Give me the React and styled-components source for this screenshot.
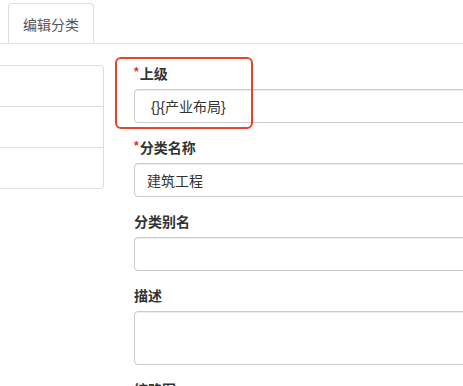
import React from 'react';
import styled, { createGlobalStyle } from 'styled-components';

const GlobalStyle = createGlobalStyle`
  html, body {
    margin: 0;
    padding: 0;
    background: #fff;
    overflow: hidden;
  }
  body {
    font-family: "Helvetica Neue", "Liberation Sans", "Noto Sans CJK SC", sans-serif;
    font-size: 14px;
    color: #333;
  }
`;

const fields = [
  { label: '上级', required: true, value: '{}{产业布局}', indent: 16 },
  { label: '分类名称', required: true, value: '建筑工程', indent: 12 },
  { label: '分类别名', required: false, value: '' },
  { label: '描述', required: false, value: '', multiline: true },
  { label: '缩略图', required: false, value: '' },
];

const App = () => {
  return (
    <Page>
      <GlobalStyle />
      <TabBar>
        <Tab>编辑分类</Tab>
      </TabBar>
      <Body>
        <Side>
          <ListRow />
          <ListRow />
          <ListRow />
        </Side>
        <Form>
          {fields.map((f, i) => (
            <Group key={f.label}>
              {i === 0 && <Highlight />}
              <Label>
                {f.required && <Star>*</Star>}
                {f.label}
              </Label>
              {f.multiline ? (
                <Area />
              ) : (
                <Field $indent={f.indent}>{f.value}</Field>
              )}
            </Group>
          ))}
        </Form>
      </Body>
    </Page>
  );
};
export default App;

const Page = styled.div`
  width: 463px;
  height: 386px;
  overflow: hidden;
`;

const TabBar = styled.div`
  display: flex;
  padding: 3px 0 0 8px;
  border-bottom: 1px solid #ddd;
  height: 40px;
`;

const Tab = styled.div`
  width: 86px;
  height: 40px;
  box-sizing: border-box;
  border: 1px solid #ddd;
  border-bottom-color: #fff;
  border-radius: 4px 4px 0 0;
  background: #fff;
  display: flex;
  align-items: center;
  justify-content: center;
  color: #555;
  font-size: 14px;
  padding-top: 1px;
`;

const Body = styled.div`
  display: flex;
  align-items: flex-start;
  gap: 30px;
  padding-top: 20px;
`;

const Side = styled.div`
  width: 104px;
  flex-shrink: 0;
  margin-top: 1px;
  box-sizing: border-box;
  border: 1px solid #ddd;
  border-left: none;
  border-radius: 0 4px 4px 0;
`;

const ListRow = styled.div`
  height: 40px;
  & + & {
    border-top: 1px solid #ddd;
  }
`;

const Form = styled.div`
  width: 400px;
  flex-shrink: 0;
`;

const Group = styled.div`
  position: relative;
  margin-bottom: 15px;
`;

const Highlight = styled.div`
  position: absolute;
  left: -19px;
  top: -7px;
  width: 138px;
  height: 72px;
  box-sizing: border-box;
  border: 2px solid #e8442b;
  border-radius: 6px;
  pointer-events: none;
`;

const Label = styled.div`
  height: 20px;
  line-height: 20px;
  margin-bottom: 5px;
  font-weight: bold;
  font-size: 14px;
  color: #333;
`;

const Star = styled.span`
  color: #e0312a;
  font-size: 12px;
  margin-right: 1px;
  vertical-align: top;
  line-height: 16px;
`;

const Field = styled.div`
  height: 34px;
  box-sizing: border-box;
  border: 1px solid #ccc;
  border-radius: 4px;
  box-shadow: inset 0 1px 1px rgba(0, 0, 0, 0.075);
  padding-left: ${p => p.$indent || 12}px;
  display: flex;
  align-items: center;
  font-size: 14px;
  color: #333;
`;

const Area = styled.div`
  height: 54px;
  box-sizing: border-box;
  border: 1px solid #ccc;
  border-radius: 4px;
  box-shadow: inset 0 1px 1px rgba(0, 0, 0, 0.075);
`;
